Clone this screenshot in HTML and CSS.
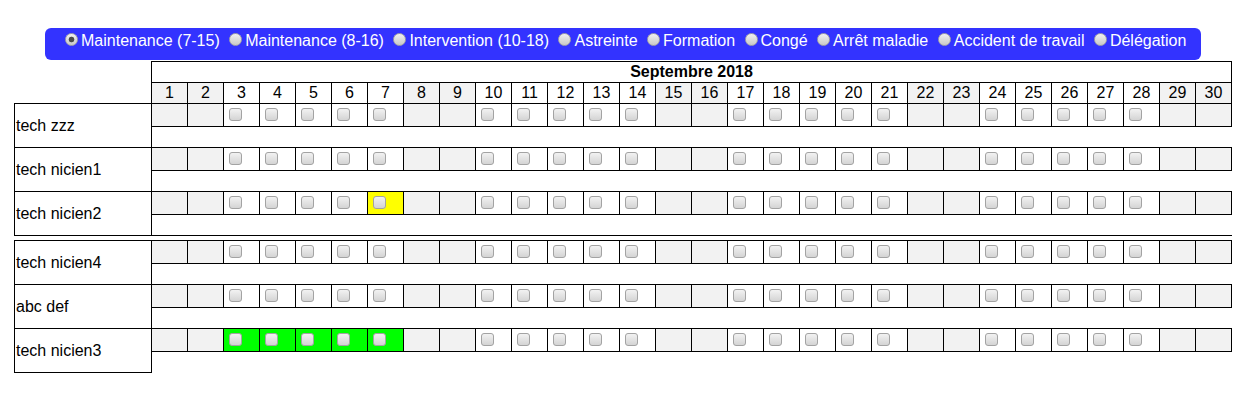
FILE: index.html
```html
<!DOCTYPE html>
<html lang="fr">

<head>
  <meta charset="UTF-8" />
  <meta name="viewport" content="width=device-width, initial-scale=1.0" />
  <title>Planning</title>
  <link rel="stylesheet" href="styles.css">
</head>

<body>
  <form class="legend">
    <input type="radio" name="type" checked>Maintenance (7-15)
    <input type="radio" name="type">Maintenance (8-16)
    <input type="radio" name="type">Intervention (10-18)
    <input type="radio" name="type">Astreinte
    <input type="radio" name="type">Formation
    <input type="radio" name="type">Congé
    <input type="radio" name="type">Arrêt maladie
    <input type="radio" name="type">Accident de travail
    <input type="radio" name="type">Délégation
  </form>
  <div class="planning"></div>
  <script>
    // 1. données
    const groups = [
      [
        { name: 'tech zzz' },
        { name: 'tech nicien1' },
        { name: 'tech nicien2', marks: { 7: 'yellow' } },
      ],
      [
        { name: 'tech nicien4' },
        { name: 'abc def' },
        { name: 'tech nicien3', marks: { 3: 'green', 4: 'green', 5: 'green', 6: 'green', 7: 'green' } },
      ],
    ]
    const days = 30
    // septembre 2018 commence un samedi
    function isWeekend(d) {
      const w = (d - 1) % 7
      return w === 0 || w === 1
    }

    function header() {
      let html = '<tr class="head"><td class="corner" rowspan="2"></td><td class="month" colspan="30">Septembre 2018</td></tr>'
      html += '<tr class="head">'
      for (let d = 1; d <= days; d++) {
        html += `<td class="num${isWeekend(d) ? ' we' : ''}">${d}</td>`
      }
      return html + '</tr>'
    }

    function techRow(t, last) {
      const marks = t.marks || {}
      let html = `<tr class="days"><td class="name" rowspan="2">${t.name}</td>`
      for (let d = 1; d <= days; d++) {
        if (isWeekend(d)) {
          html += '<td class="day we"></td>'
        } else {
          const cls = marks[d] ? ' ' + marks[d] : ''
          html += `<td class="day${cls}"><input type="checkbox"></td>`
        }
      }
      html += `</tr><tr class="gap"><td class="blank${last ? ' end' : ''}" colspan="30"></td></tr>`
      return html
    }

    const planning = document.querySelector('.planning')
    let out = ''
    for (let g = 0; g < groups.length; g++) {
      let html = '<table class="team">'
      if (g === 0) html += header()
      groups[g].forEach(function (t, i) {
        html += techRow(t, g === 0 && i === groups[g].length - 1)
      })
      out += html + '</table>'
    }
    planning.innerHTML = out
  </script>
</body>

</html>
```

FILE: styles.css
```css
* {
  box-sizing: border-box;
}

body {
  margin: 8px 0 8px 8px;
  font-family: "Liberation Sans", Arial, sans-serif;
  font-size: 16px;
  color: #000;
}

.legend {
  width: fit-content;
  margin: 20px 0 1px 37px;
  padding: 2px 15px 10px 15px;
  background: #3333ff;
  color: #fff;
  border-radius: 6px;
  line-height: 18px;
}

.legend input {
  appearance: none;
  width: 13px;
  height: 13px;
  margin: 3px 3px 0 5px;
  border: 1px solid #a6a6a6;
  border-radius: 50%;
  background: linear-gradient(#f0f0f0, #c9c9c9);
}

.legend input:checked {
  background: radial-gradient(circle, #4a4a4a 0 2.5px, transparent 3.2px), linear-gradient(#f0f0f0, #c9c9c9);
}

.planning {
  padding-left: 6px;
}

.team {
  border-collapse: collapse;
}

.team + .team {
  margin-top: 4px;
}

.team td {
  padding: 1px;
}

.corner {
  border: none;
  width: 137px;
}

.month {
  border: 1px solid #000;
  text-align: center;
  font-weight: bold;
  height: 21px;
}

.num {
  border: 1px solid #000;
  text-align: center;
  width: 36px;
  height: 21px;
}

.we {
  background: #f2f2f2;
}

.name {
  border: 1px solid #000;
  vertical-align: middle;
  white-space: nowrap;
  width: 137px;
}

.day {
  border: 1px solid #000;
  vertical-align: top;
  width: 36px;
  height: 23px;
}

.day.yellow {
  background: #ffff00;
}

.day.green {
  background: #00ff00;
}

.day input {
  appearance: none;
  display: block;
  width: 13px;
  height: 13px;
  margin: 3px 3px 3px 4px;
  border: 1px solid #a3a3a3;
  border-radius: 3px;
  background: linear-gradient(#f2f2f2, #d4d4d4);
}

.blank {
  height: 21px;
}

.blank.end {
  border-bottom: 1px solid #000;
}
```
